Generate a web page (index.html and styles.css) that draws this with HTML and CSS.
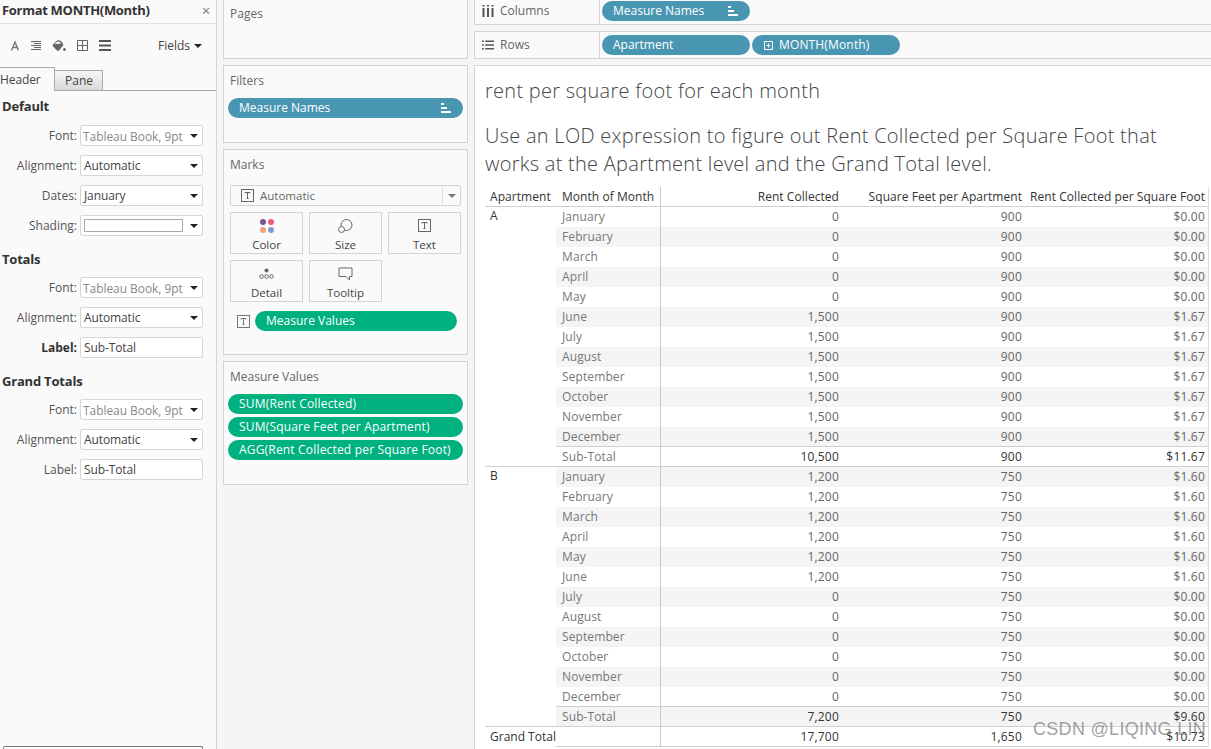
FILE: index.html
```html
<!DOCTYPE html>
<html lang="en">
<head>
<meta charset="utf-8">
<title>Format MONTH(Month)</title>
<link rel="stylesheet" href="styles.css">
</head>
<body>
<div class="app">
  <aside class="format">
    <header class="format-title"><span>Format MONTH(Month)</span><span class="close">×</span></header>
    <div class="format-tools">
      <svg class="tool" width="10" height="12" viewBox="0 0 10 12"><path d="M1.500 10.500 L5 2 L8.500 10.500 M3 7.500 H7" fill="none" stroke="#777" stroke-width="1.400"/></svg>
      <svg class="tool" width="10" height="10" viewBox="0 0 10 10"><path d="M0 0.500H10M3 2.500H10M0 4.500H10M3 6.500H10M0 8.500H10" fill="none" stroke="#666" stroke-width="1"/></svg>
      <svg class="tool" width="14" height="14" viewBox="0 0 14 14"><path d="M0.500 6 L5 1.500 Q8 0.500 10 3 L11.500 6 L7 11.500 Q6 12 5 11.500 L1.500 8 Z" fill="#666"/><path d="M2.500 5 L5.500 2.500 Q8 2 9 4.800 Z" fill="#fafafa"/><circle cx="12.500" cy="10.500" r="1.400" fill="#666"/></svg>
      <svg class="tool" width="11" height="11" viewBox="0 0 11 11"><path d="M0.500 0.500H10.500V10.500H0.500ZM5.500 0.500V10.500M0.500 5.500H10.500" fill="none" stroke="#666" stroke-width="1"/></svg>
      <svg class="tool" width="12" height="11" viewBox="0 0 12 11"><path d="M0 1H12M0 5.500H12M0 10H12" fill="none" stroke="#555" stroke-width="2"/></svg>
      <span class="fields">Fields <i class="caret"></i></span>
    </div>
    <div class="tabs">
      <span class="tab tab-on">Header</span>
      <span class="tab tab-off">Pane</span>
      <span class="tab-rest"></span>
    </div>
    <section class="fmt-group">
      <h3>Default</h3>
      <div class="fmt-row"><label>Font:</label><div class="sel muted"><span>Tableau Book, 9pt</span><i class="caret"></i></div></div>
      <div class="fmt-row"><label>Alignment:</label><div class="sel"><span>Automatic</span><i class="caret"></i></div></div>
      <div class="fmt-row"><label>Dates:</label><div class="sel"><span>January</span><i class="caret"></i></div></div>
      <div class="fmt-row"><label>Shading:</label><div class="sel"><span class="swatch"></span><i class="caret"></i></div></div>
    </section>
    <section class="fmt-group">
      <h3>Totals</h3>
      <div class="fmt-row"><label>Font:</label><div class="sel muted"><span>Tableau Book, 9pt</span><i class="caret"></i></div></div>
      <div class="fmt-row"><label>Alignment:</label><div class="sel"><span>Automatic</span><i class="caret"></i></div></div>
      <div class="fmt-row"><label class="strong">Label:</label><div class="sel"><span>Sub-Total</span></div></div>
    </section>
    <section class="fmt-group">
      <h3>Grand Totals</h3>
      <div class="fmt-row"><label>Font:</label><div class="sel muted"><span>Tableau Book, 9pt</span><i class="caret"></i></div></div>
      <div class="fmt-row"><label>Alignment:</label><div class="sel"><span>Automatic</span><i class="caret"></i></div></div>
      <div class="fmt-row"><label>Label:</label><div class="sel"><span>Sub-Total</span></div></div>
    </section>
    <div class="clear-box"></div>
  </aside>

  <div class="cards">
    <section class="card card-pages"><h4>Pages</h4></section>
    <section class="card card-filters">
      <h4>Filters</h4>
      <div class="pill blue"><span>Measure Names</span><svg class="sort" width="10" height="10" viewBox="0 0 10 10"><path d="M0 0H3V2H0ZM0 4H6V6H0ZM0 8H10V10H0Z" fill="#fff"/></svg></div>
    </section>
    <section class="card card-marks">
      <h4>Marks</h4>
      <div class="mark-type">
        <span class="mark-type-main">
          <svg width="13" height="13" viewBox="0 0 13 13"><rect x="0.500" y="0.500" width="12" height="12" fill="none" stroke="#666"/><path d="M4 4.500V3.500H9V4.500M6.500 3.500V9.500M5.500 9.500H7.500" fill="none" stroke="#666"/></svg>
          <span>Automatic</span>
        </span>
        <span class="mark-type-arrow"><i class="caret caret-grey"></i></span>
      </div>
      <div class="mark-grid">
        <div class="mark-btn">
          <svg width="14" height="14" viewBox="0 0 14 14"><circle cx="3" cy="3" r="3" fill="#76598c"/><circle cx="11" cy="3" r="3" fill="#ee5a75"/><circle cx="3" cy="11" r="3" fill="#f0a36e"/><circle cx="11" cy="11" r="3" fill="#7d9ec9"/></svg>
          <span>Color</span>
        </div>
        <div class="mark-btn">
          <svg width="15" height="14" viewBox="0 0 15 14"><circle cx="8.500" cy="6" r="5.500" fill="none" stroke="#666"/><circle cx="3.500" cy="10.500" r="3" fill="#fafafa" stroke="#666"/></svg>
          <span>Size</span>
        </div>
        <div class="mark-btn">
          <svg width="13" height="13" viewBox="0 0 13 13"><rect x="0.500" y="0.500" width="12" height="12" fill="none" stroke="#666"/><path d="M4 4.500V3.500H9V4.500M6.500 3.500V9.500M5.500 9.500H7.500" fill="none" stroke="#666"/></svg>
          <span>Text</span>
        </div>
        <div class="mark-btn">
          <svg width="15" height="14" viewBox="0 0 15 14"><circle cx="7.500" cy="3.500" r="2" fill="#666"/><circle cx="2.500" cy="9.500" r="1.800" fill="none" stroke="#666"/><circle cx="7.500" cy="9.500" r="1.800" fill="none" stroke="#666"/><circle cx="12.500" cy="9.500" r="1.800" fill="none" stroke="#666"/></svg>
          <span>Detail</span>
        </div>
        <div class="mark-btn">
          <svg width="15" height="14" viewBox="0 0 15 14"><path d="M1 1H14V9.500H11.500V13L8 9.500H1Z" fill="none" stroke="#666"/></svg>
          <span>Tooltip</span>
        </div>
      </div>
      <div class="mark-field">
        <svg width="13" height="13" viewBox="0 0 13 13"><rect x="0.500" y="0.500" width="12" height="12" fill="none" stroke="#777"/><path d="M4 4.500V3.500H9V4.500M6.500 3.500V9.500M5.500 9.500H7.500" fill="none" stroke="#777"/></svg>
        <div class="pill green"><span>Measure Values</span></div>
      </div>
    </section>
    <section class="card card-values">
      <h4>Measure Values</h4>
      <div class="pill-stack">
        <div class="pill green"><span>SUM(Rent Collected)</span></div>
        <div class="pill green"><span>SUM(Square Feet per Apartment)</span></div>
        <div class="pill green"><span>AGG(Rent Collected per Square Foot)</span></div>
      </div>
    </section>
  </div>

  <main class="work">
    <div class="shelf shelf-cols">
      <div class="shelf-label">
        <svg width="12" height="12" viewBox="0 0 12 12"><path d="M1.500 3V12M6 3V12M10.500 3V12M1.500 0V1.500M6 0V1.500M10.500 0V1.500" fill="none" stroke="#555" stroke-width="2"/></svg>
        <span>Columns</span>
      </div>
      <div class="shelf-pills">
        <div class="pill blue shelf-pill"><span>Measure Names</span><svg class="sort" width="10" height="10" viewBox="0 0 10 10"><path d="M0 0H3V2H0ZM0 4H6V6H0ZM0 8H10V10H0Z" fill="#fff"/></svg></div>
      </div>
    </div>
    <div class="shelf shelf-rows">
      <div class="shelf-label">
        <svg width="12" height="10" viewBox="0 0 13 10"><path d="M0 1H2M3.500 1H13M0 5H2M3.500 5H13M0 9H2M3.500 9H13" fill="none" stroke="#555" stroke-width="1.600"/></svg>
        <span>Rows</span>
      </div>
      <div class="shelf-pills">
        <div class="pill blue shelf-pill"><span>Apartment</span></div>
        <div class="pill blue shelf-pill pill-plus">
          <svg width="9" height="9" viewBox="0 0 9 9"><path d="M0.500 0.500H8.500V8.500H0.500ZM2.500 4.500H6.500M4.500 2.500V6.500" fill="none" stroke="#fff"/></svg>
          <span>MONTH(Month)</span>
        </div>
      </div>
    </div>
    <section class="view">
      <h1>rent per square foot for each month</h1>
      <h2>Use an LOD expression to figure out Rent Collected per Square Foot that works at the Apartment level and the Grand Total level.</h2>
      <div class="crosstab">
        <div class="ct-head"><b>Apartment</b><b>Month of Month</b><b class="n">Rent Collected</b><b class="n">Square Feet per Apartment</b><b class="n">Rent Collected per Square Foot</b></div>

        <div class="ct-row"><b class="apt">A</b><span>January</span><span class="n">0</span><span class="n">900</span><span class="n">$0.00</span></div>
        <div class="ct-row alt"><b class="apt"></b><span>February</span><span class="n">0</span><span class="n">900</span><span class="n">$0.00</span></div>
        <div class="ct-row"><b class="apt"></b><span>March</span><span class="n">0</span><span class="n">900</span><span class="n">$0.00</span></div>
        <div class="ct-row alt"><b class="apt"></b><span>April</span><span class="n">0</span><span class="n">900</span><span class="n">$0.00</span></div>
        <div class="ct-row"><b class="apt"></b><span>May</span><span class="n">0</span><span class="n">900</span><span class="n">$0.00</span></div>
        <div class="ct-row alt"><b class="apt"></b><span>June</span><span class="n">1,500</span><span class="n">900</span><span class="n">$1.67</span></div>
        <div class="ct-row"><b class="apt"></b><span>July</span><span class="n">1,500</span><span class="n">900</span><span class="n">$1.67</span></div>
        <div class="ct-row alt"><b class="apt"></b><span>August</span><span class="n">1,500</span><span class="n">900</span><span class="n">$1.67</span></div>
        <div class="ct-row"><b class="apt"></b><span>September</span><span class="n">1,500</span><span class="n">900</span><span class="n">$1.67</span></div>
        <div class="ct-row alt"><b class="apt"></b><span>October</span><span class="n">1,500</span><span class="n">900</span><span class="n">$1.67</span></div>
        <div class="ct-row"><b class="apt"></b><span>November</span><span class="n">1,500</span><span class="n">900</span><span class="n">$1.67</span></div>
        <div class="ct-row alt"><b class="apt"></b><span>December</span><span class="n">1,500</span><span class="n">900</span><span class="n">$1.67</span></div>
        <div class="ct-row sub"><b class="apt"></b><span>Sub-Total</span><span class="n t">10,500</span><span class="n t">900</span><span class="n t">$11.67</span></div>

        <div class="ct-row alt group-start"><span class="apt apt-plain">B</span><span>January</span><span class="n">1,200</span><span class="n">750</span><span class="n">$1.60</span></div>
        <div class="ct-row"><b class="apt"></b><span>February</span><span class="n">1,200</span><span class="n">750</span><span class="n">$1.60</span></div>
        <div class="ct-row alt"><b class="apt"></b><span>March</span><span class="n">1,200</span><span class="n">750</span><span class="n">$1.60</span></div>
        <div class="ct-row"><b class="apt"></b><span>April</span><span class="n">1,200</span><span class="n">750</span><span class="n">$1.60</span></div>
        <div class="ct-row alt"><b class="apt"></b><span>May</span><span class="n">1,200</span><span class="n">750</span><span class="n">$1.60</span></div>
        <div class="ct-row"><b class="apt"></b><span>June</span><span class="n">1,200</span><span class="n">750</span><span class="n">$1.60</span></div>
        <div class="ct-row alt"><b class="apt"></b><span>July</span><span class="n">0</span><span class="n">750</span><span class="n">$0.00</span></div>
        <div class="ct-row"><b class="apt"></b><span>August</span><span class="n">0</span><span class="n">750</span><span class="n">$0.00</span></div>
        <div class="ct-row alt"><b class="apt"></b><span>September</span><span class="n">0</span><span class="n">750</span><span class="n">$0.00</span></div>
        <div class="ct-row"><b class="apt"></b><span>October</span><span class="n">0</span><span class="n">750</span><span class="n">$0.00</span></div>
        <div class="ct-row alt"><b class="apt"></b><span>November</span><span class="n">0</span><span class="n">750</span><span class="n">$0.00</span></div>
        <div class="ct-row"><b class="apt"></b><span>December</span><span class="n">0</span><span class="n">750</span><span class="n">$0.00</span></div>
        <div class="ct-row alt sub"><b class="apt"></b><span>Sub-Total</span><span class="n t">7,200</span><span class="n t">750</span><span class="n t">$9.60</span></div>

        <div class="ct-row grand group-start"><b class="apt grand-label">Grand Total</b><span></span><span class="n t">17,700</span><span class="n t">1,650</span><span class="n t">$10.73</span></div>
      </div>
      <div class="watermark">CSDN @LIQING LIN</div>
    </section>
  </main>
</div>
</body>
</html>
```

FILE: styles.css
```css
* { box-sizing: border-box; }
html, body { margin: 0; height: 749px; overflow: hidden; }
body {
  font-family: "Open Sans", "Noto Sans", sans-serif;
  font-size: 12px;
  color: #555;
  background: #f5f5f5;
}
.app {
  display: grid;
  grid-template-columns: 217px 257px 737px;
  height: 749px;
  overflow: hidden;
}

/* Format pane */
.format {
  background: #fafafa;
  border-right: 1px solid #d4d4d4;
  height: 749px;
  overflow: hidden;
  display: flex;
  flex-direction: column;
}
.format-title {
  display: flex;
  justify-content: space-between;
  align-items: center;
  height: 24px;
  padding: 0 6px 4px 2px;
  border-bottom: 1px solid #e4e4e4;
  font-weight: 700;
  font-size: 13px;
  color: #333;
  letter-spacing: -0.3px;
}
.close { font-size: 15px; font-weight: 400; color: #777; }
.format-tools {
  display: flex;
  align-items: center;
  height: 43px;
  padding: 0 14px 0 10px;
  gap: 11px;
}
.fields { margin-left: auto; color: #444; display: inline-flex; align-items: center; gap: 4px; }
.caret {
  display: inline-block;
  width: 0; height: 0;
  border-left: 4px solid transparent;
  border-right: 4px solid transparent;
  border-top: 4px solid #222;
}
.caret-grey { border-top-color: #777; }
.tabs { display: flex; align-items: flex-end; height: 24px; }
.tab { display: flex; align-items: center; color: #444; }
.tab-on {
  width: 55px; height: 24px;
  padding: 0 0 1px 0;
  border-top: 1px solid #aaa;
  border-right: 1px solid #aaa;
  letter-spacing: -0.1px;
}
.tab-off {
  width: 48px; height: 21px;
  padding: 0 0 0 10px;
  border-top: 1px solid #aaa;
  border-right: 1px solid #aaa;
  border-bottom: 1px solid #aaa;
  background: linear-gradient(#f6f6f6, #d9d9d9);
}
.tab-rest { flex: 1; border-bottom: 1px solid #aaa; }
.fmt-group { padding: 5px 13px 0 2px; }
.fmt-group h3 {
  margin: 0 0 9px;
  height: 18px;
  line-height: 18px;
  font-size: 13px;
  font-weight: 700;
  color: #333;
  letter-spacing: -0.2px;
}
.tabs + .fmt-group { padding-top: 6px; }
.tabs + .fmt-group h3 { margin-bottom: 10px; }
.fmt-row {
  display: grid;
  grid-template-columns: 75px 123px;
  column-gap: 3px;
  align-items: center;
  height: 21px;
  margin-bottom: 9px;
}
.fmt-row label { text-align: right; color: #555; }
.fmt-row label.strong { font-weight: 700; color: #333; }
.sel {
  display: flex;
  align-items: center;
  justify-content: space-between;
  height: 21px;
  padding: 0 4px 0 3px;
  background: #fff;
  border: 1px solid #d6d6d6;
  border-radius: 2px;
  color: #444;
  white-space: nowrap;
  overflow: hidden;
}
.sel > span { letter-spacing: -0.1px; }
.sel.muted { color: #888; padding-left: 2px; }
.sel.muted > span { letter-spacing: 0; font-size: 11.9px; }
.sel .caret { flex: none; margin-left: 2px; }
.swatch { display: block; width: 99px; height: 13px; border: 1px solid #aaa; background: #fff; }
.clear-box {
  margin: auto 0 0 3px;
  width: 200px;
  height: 3px;
  border: 1px solid #777;
  border-bottom: 0;
  border-radius: 2px 2px 0 0;
  background: #fff;
}

/* Cards column */
.cards {
  display: flex;
  flex-direction: column;
  gap: 6px;
  padding: 0 6px;
}
.card {
  background: #fafafa;
  border: 1px solid #d4d4d4;
  padding: 0 4px;
}
.card h4 {
  margin: 0;
  font-size: 12px;
  font-weight: 400;
  color: #666;
  padding: 6px 2px 0 2px;
  height: 32px;
}
.card-pages { height: 60px; margin-top: -1px; }
.card-pages h4 { padding-top: 5px; }
.card-filters { height: 78px; }
.card-marks { height: 206px; }
.card-values { height: 124px; }
.pill {
  display: flex;
  align-items: center;
  justify-content: space-between;
  height: 20px;
  padding: 0 12px 0 11px;
  border-radius: 10px;
  color: #fff;
  white-space: nowrap;
}
.pill > span { margin-bottom: 2px; }
.blue { background: #4996b2; }
.green { background: #00b180; }
.sort { flex: none; }
.mark-type {
  display: flex;
  height: 21px;
  margin: 3px 2px 6px;
  background: #fafafa;
  border: 1px solid #d4d4d4;
  border-radius: 2px;
}
.mark-type-main {
  flex: 1;
  display: flex;
  align-items: center;
  gap: 6px;
  padding-left: 10px;
  color: #666;
  font-size: 11.5px;
}
.mark-type-arrow {
  width: 18px;
  display: flex;
  align-items: center;
  justify-content: center;
  border-left: 1px solid #e0e0e0;
}
.mark-grid {
  display: grid;
  grid-template-columns: repeat(3, 73px);
  grid-auto-rows: 42px;
  gap: 6px;
  margin: 0 2px;
}
.mark-btn {
  display: flex;
  flex-direction: column;
  align-items: center;
  justify-content: space-between;
  padding: 6px 0 1px;
  border: 1px solid #d4d4d4;
  color: #444;
  font-size: 11.5px;
  line-height: 15px;
}
.mark-field {
  display: flex;
  align-items: center;
  gap: 5px;
  margin: 9px 6px 0 9px;
}
.mark-field .pill { flex: 1; }
.pill-stack { display: flex; flex-direction: column; gap: 3px; }
.card-values .pill { padding-right: 6px; letter-spacing: 0.18px; }

/* Work area */
.work { display: flex; flex-direction: column; gap: 6px; min-width: 0; }
.shelf {
  display: flex;
  height: 28px;
  background: #fafafa;
  border: 1px solid #d4d4d4;
  border-right: 0;
}
.shelf-cols { height: 26px; margin-top: -1px; }
.shelf-cols .shelf-label, .shelf-cols .shelf-pills { padding-bottom: 2px; }
.shelf-label {
  width: 125px;
  flex: none;
  display: flex;
  align-items: center;
  gap: 6px;
  padding-left: 7px;
  border-right: 1px solid #d4d4d4;
  color: #666;
}
.shelf-label > span { margin-bottom: 2px; }
.shelf-pills {
  display: flex;
  align-items: center;
  gap: 2px;
  padding-left: 2px;
}
.shelf-pill { width: 148px; }
.pill-plus { justify-content: flex-start; gap: 6px; padding-left: 12px; letter-spacing: 0.15px; }

.view {
  position: relative;
  flex: 1;
  background: #fff;
  border: 1px solid #d4d4d4;
  border-right: 0;
  border-bottom: 0;
  padding: 0 0 0 10px;
  overflow: hidden;
}
.view h1, .view h2 {
  margin: 0;
  font-weight: 300;
  font-size: 20px;
  color: #444;
  letter-spacing: 0.27px;
}
.view h1 { line-height: 28px; padding-top: 11px; }
.view h2 { line-height: 28px; padding-top: 17px; width: 700px; }

.crosstab { margin-top: 9px; width: 724px; }
.ct-head, .ct-row {
  display: grid;
  grid-template-columns: 71px 105px 179px 183px 186px;
  height: 20px;
  line-height: 20px;
  white-space: nowrap;
}
.ct-head { border-bottom: 1px solid #d0d0d0; color: #333; }
.ct-head b { font-weight: 500; padding-left: 6px; color: #333; letter-spacing: 0.05px; }
.ct-head b:first-child { padding-left: 5px; }
.ct-head b:nth-child(2) { border-right: 1px solid #c8c8c8; }
.ct-head .n, .ct-row .n { text-align: right; padding-right: 1px; }
.ct-row .n { letter-spacing: 0.2px; }
.ct-head .n:last-child, .ct-row .n:last-child { padding-right: 3px; border-right: 1px solid #dcdcdc; }
.ct-row > span { color: #666; }
.ct-row > span:nth-child(2) { padding-left: 6px; border-right: 1px solid #c8c8c8; color: #777; letter-spacing: 0.1px; }
.ct-row.alt > span { background: #f4f4f4; }
.ct-row .apt { padding-left: 5px; line-height: 18px; font-weight: 500; color: #333; background: #fff; }
.ct-row .apt-plain { font-weight: 400; }
.ct-row.alt > .apt { background: #fff; }
.ct-row.sub > span { box-shadow: 0 -1px 0 #d0d0d0; }
.ct-row .t { color: #333; font-weight: 500; }
.group-start { box-shadow: 0 -1px 0 #d0d0d0; position: relative; }
.grand { border-bottom: 1px solid #d0d0d0; }
.ct-row .grand-label { line-height: 20px; }
.watermark {
  position: absolute;
  left: 558px;
  top: 653px;
  font-family: "Liberation Sans", sans-serif;
  font-size: 18px;
  color: rgba(130, 130, 130, 0.75);
  letter-spacing: 0.3px;
  white-space: nowrap;
}
```
